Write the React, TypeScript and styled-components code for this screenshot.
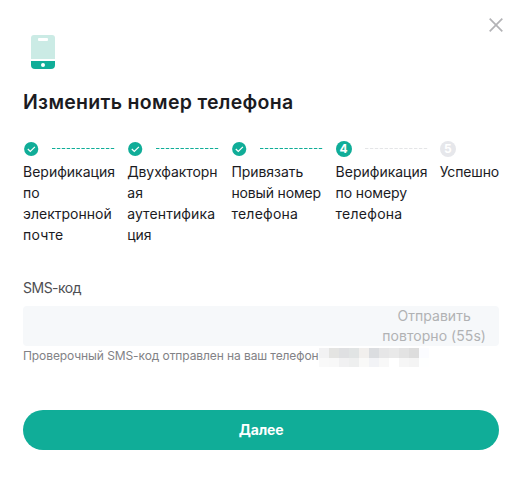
import React from "react";
import styled, { createGlobalStyle } from "styled-components";

const GREEN = "#10ad98";

const GlobalStyle = createGlobalStyle`
  body {
    margin: 0;
    background: #fff;
    font-family: Inter, "Noto Sans", sans-serif;
    color: #1b1b1f;
  }
`;

const Dialog = styled.main`
  position: relative;
  box-sizing: border-box;
  width: 521px;
  height: 487px;
  padding: 35px 22px 0 23px;
  background: #fff;
  overflow: hidden;
`;

const CloseButton = styled.button`
  position: absolute;
  top: 17px;
  right: 17px;
  width: 16px;
  height: 16px;
  padding: 0;
  border: 0;
  background: none;
  svg { display: block; }
`;

const PhoneIcon = styled.svg`
  display: block;
  margin-left: 8px;
`;

const Title = styled.h1`
  margin: 19px 0 0;
  font-size: 19.5px;
  line-height: 28px;
  font-weight: 600;
  letter-spacing: 0.31px;
  white-space: nowrap;
`;

const Steps = styled.ol`
  display: grid;
  grid-template-columns: repeat(4, 104.2px) 1fr;
  margin: 25px 0 0;
  padding: 0;
  list-style: none;
`;

const Step = styled.li`
  min-width: 0;
`;

const StepTrack = styled.div`
  display: flex;
  align-items: center;
  height: 16px;
`;

const Badge = styled.span<{ $active: boolean }>`
  display: flex;
  align-items: center;
  justify-content: center;
  width: 16px;
  height: 16px;
  border-radius: 50%;
  background: ${(p) => (p.$active ? GREEN : "#e6e7eb")};
  color: #fff;
  font-size: 12px;
  line-height: 16px;
  font-weight: 700;
`;

const Connector = styled.svg`
  display: block;
  margin-left: 13px;
`;

const StepLabel = styled.div`
  margin-top: 4px;
  font-size: 14px;
  line-height: 21px;
  white-space: nowrap;
`;

const Line = styled.span<{ $spacing: number }>`
  display: block;
  letter-spacing: ${(p) => p.$spacing}px;
`;

const FieldLabel = styled.label`
  display: block;
  margin-top: 33px;
  font-size: 14px;
  line-height: 20px;
  letter-spacing: -0.5px;
  color: #4e4e52;
`;

const Field = styled.div`
  display: flex;
  align-items: center;
  justify-content: flex-end;
  box-sizing: border-box;
  height: 40px;
  margin-top: 8px;
  padding-right: 13px;
  border-radius: 4px;
  background: #f6f8fa;
`;

const Resend = styled.span`
  font-size: 14px;
  line-height: 20px;
  color: #b1b2b4;
  text-align: center;
  white-space: nowrap;
`;

const Hint = styled.div`
  display: flex;
  height: 21px;
  font-size: 12px;
  line-height: 20px;
  letter-spacing: -0.09px;
  color: #828286;
  white-space: nowrap;
`;

const HintText = styled.span`
  width: 296px;
`;

const Mosaic = styled.div`
  display: grid;
  grid-template-columns: repeat(11, 10px);
  grid-template-rows: 10px 9px;
  margin-top: 2px;
`;

const Cell = styled.span<{ $color: string }>`
  background: ${(p) => p.$color};
`;

const Submit = styled.button`
  display: block;
  width: 100%;
  height: 40px;
  margin-top: 43px;
  padding: 0;
  border: 0;
  border-radius: 20px;
  background: ${GREEN};
  color: #fff;
  font: 700 14px/40px Inter, "Noto Sans", sans-serif;
  letter-spacing: -0.15px;
`;

type StepData = { lines: [string, number][]; state: "done" | "active" | "todo" };

const steps: StepData[] = [
  { lines: [["Верификация", 0], ["по", 0], ["электронной", 0], ["почте", 0.2]], state: "done" },
  { lines: [["Двухфакторн", -0.1], ["ая", 0.2], ["аутентифика", 0.1], ["ция", 0]], state: "done" },
  { lines: [["Привязать", -0.05], ["новый номер", -0.15], ["телефона", 0.25]], state: "done" },
  { lines: [["Верификация", 0], ["по номеру", -0.1], ["телефона", 0.25]], state: "active" },
  { lines: [["Успешно", -0.15]], state: "todo" },
];

const mosaic = [
  "#f2f2f3", "#e4e4e2", "#dfe0e2", "#e1e4e4", "#f1efed", "#dbdde0", "#e6e6e7", "#e9e9e9", "#e3e3e3", "#dddddd", "#fbfcff",
  "#f9f9f9", "#f8f8f8", "#f1f1f2", "#eeefef", "#f9f9f8", "#f2f3f6", "#f8f8f8", "#ffffff", "#f6f6f6", "#f4f4f4", "#feffff",
];

export default function App() {
  return (
    <>
      <GlobalStyle />
      <Dialog>
        <CloseButton aria-label="Закрыть">
          <svg width="16" height="16" viewBox="0 0 16 16">
            <path d="M1.7 1.7 14.3 14.3M14.3 1.7 1.7 14.3" stroke="#b3b3b6" strokeWidth="1.7" />
          </svg>
        </CloseButton>
        <PhoneIcon width="24" height="34" viewBox="0 0 24 34">
          <path d="M3 0h18a3 3 0 0 1 3 3v21H0V3a3 3 0 0 1 3-3z" fill="#cbebe5" />
          <rect x="7" y="3" width="10" height="3" rx="1" fill="#fff" />
          <path d="M0 26h24v4a4 4 0 0 1-4 4H4a4 4 0 0 1-4-4z" fill={GREEN} />
          <circle cx="12" cy="30" r="2" fill="#fff" />
        </PhoneIcon>
        <Title>Изменить номер телефона</Title>
        <Steps>
          {steps.map((step, i) => (
            <Step key={i}>
              <StepTrack>
                {step.state === "done" ? (
                  <svg width="16" height="16" viewBox="0 0 16 16">
                    <circle cx="8.2" cy="8" r="7.1" fill={GREEN} />
                    <path d="m4.8 8 2.5 2.5 4.6-4.7" fill="none" stroke="#fff" strokeWidth="1.2" />
                  </svg>
                ) : (
                  <Badge $active={step.state === "active"}>{i + 1}</Badge>
                )}
                {i < steps.length - 1 && (
                  <Connector width="63" height="2" viewBox="0 0 63 2">
                    <path d="M0 .5h62.5" stroke={step.state === "done" ? GREEN : "#e4e5e7"} strokeDasharray="3.4 1.5" />
                  </Connector>
                )}
              </StepTrack>
              <StepLabel>
                {step.lines.map(([text, spacing]) => (
                  <Line key={text} $spacing={spacing}>{text}</Line>
                ))}
              </StepLabel>
            </Step>
          ))}
        </Steps>
        <FieldLabel>SMS-код</FieldLabel>
        <Field>
          <Resend>
            <Line $spacing={0.05}>Отправить</Line>
            <Line $spacing={0.05}>повторно (55s)</Line>
          </Resend>
        </Field>
        <Hint>
          <HintText>Проверочный SMS-код отправлен на ваш телефон</HintText>
          <Mosaic>
            {mosaic.map((color, i) => <Cell key={i} $color={color} />)}
          </Mosaic>
        </Hint>
        <Submit>Далее</Submit>
      </Dialog>
    </>
  );
}
